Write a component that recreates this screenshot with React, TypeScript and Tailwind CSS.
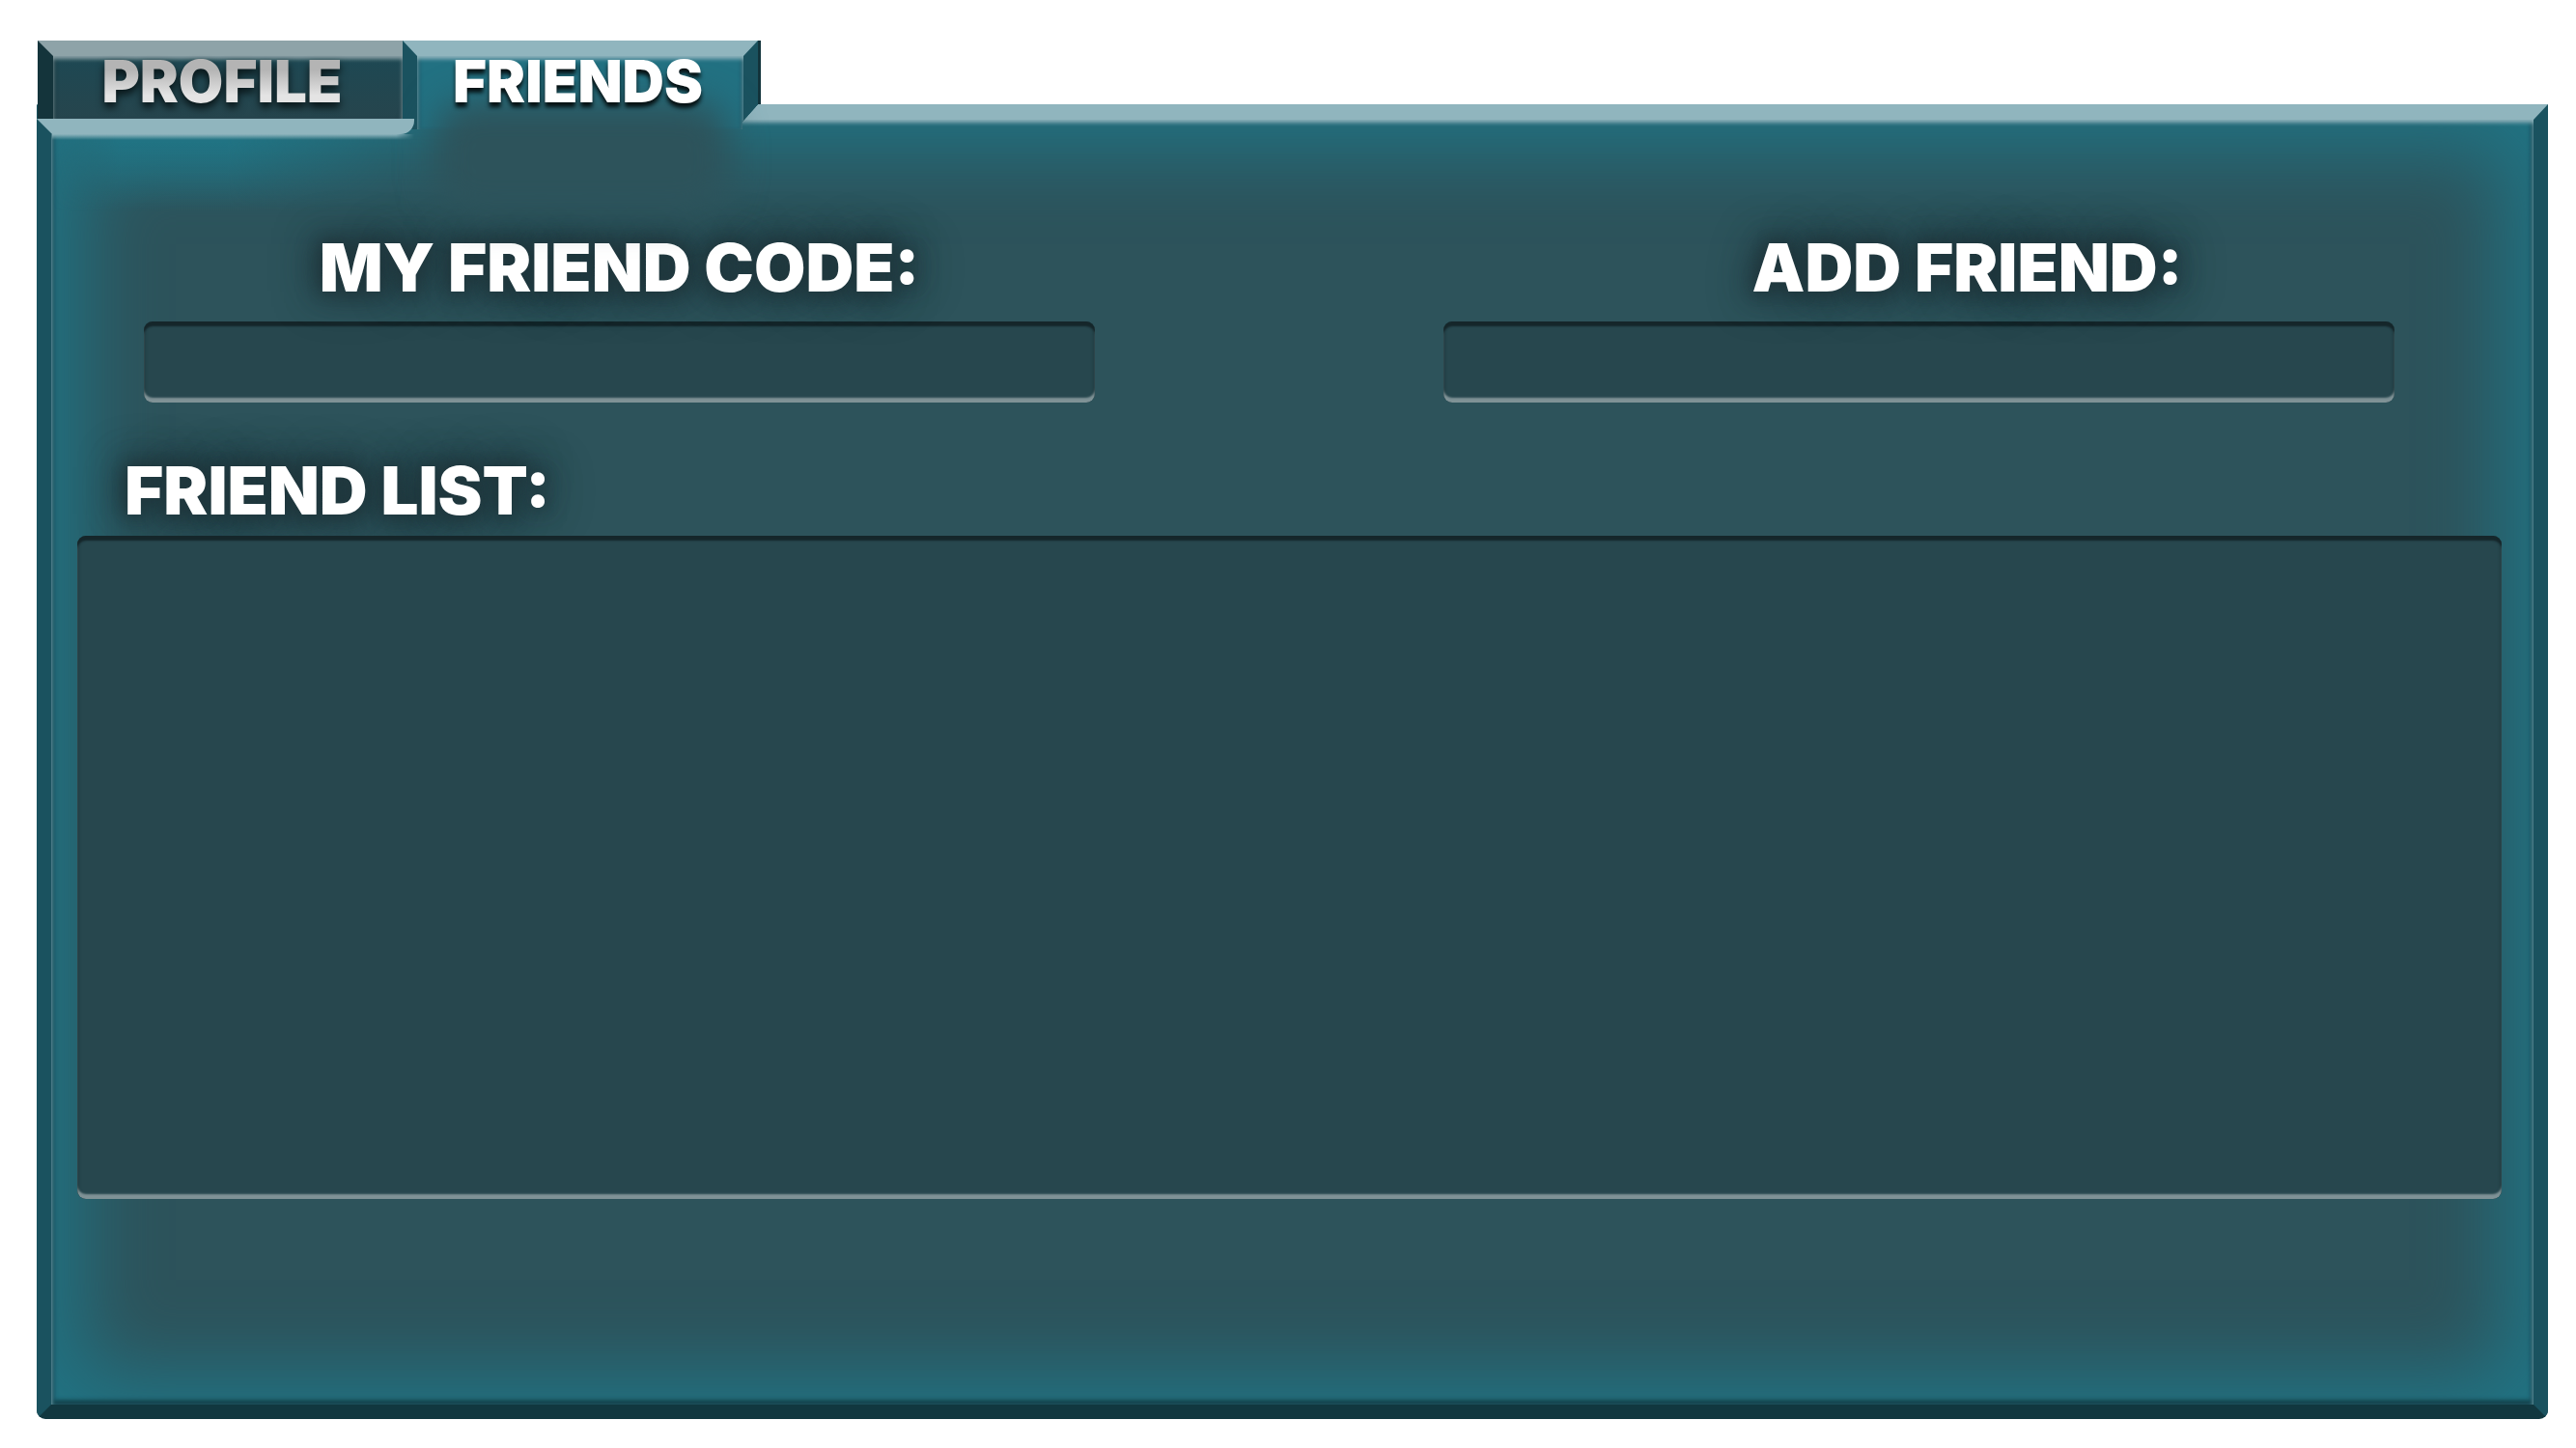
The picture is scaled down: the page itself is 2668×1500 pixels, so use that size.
import { useState } from "react";

const heading = "font-['Inter','Liberation_Sans',sans-serif] font-black whitespace-nowrap";

const glow =
  "text-white [text-shadow:0_0_14px_#20373d,0_0_24px_#20373d,0_0_36px_#20373d,0_0_48px_#20373d]";

const well =
  "rounded-[9px] bg-[#27474e] shadow-[inset_0_5px_2px_#15262a,inset_0_-5px_2px_#7f9296,inset_2px_0_3px_#203c42,inset_-2px_0_3px_#203c42]";

function Tabs() {
  return (
    <div role="tablist" aria-label="Account" className="relative z-10 flex items-start">
      <div className="w-[378px]">
        <button
          type="button"
          role="tab"
          aria-selected={false}
          className="flex h-[81px] w-full items-center justify-center border-t-[16px] border-l-[16px] border-t-[#8ea3a8] border-l-[#14343b] bg-linear-to-b from-[#1d4853] to-[#26454d] pr-3 pb-[14px] shadow-[inset_0_3px_4px_#8ea3a8,inset_4px_0_4px_-2px_#14343b]"
        >
          <span
            className={`${heading} bg-linear-to-b from-[#b4b4b4] from-30% to-[#e4e4e4] to-75% bg-clip-text text-[60px] leading-[60px] text-transparent drop-shadow-[0_5px_4px_#071214]`}
          >
            PROFILE
          </span>
        </button>
        <div className="relative z-10 -ml-px w-[391px]">
          <div className="h-[16px] rounded-br-[14px] border-t-[16px] border-l-[16px] border-t-[#90b5be] border-l-[#1a525f]" />
          <div className="ml-[16px] h-[6px] bg-linear-to-b from-[#90b5be] to-[#90b5be]/0 mask-r-from-95%" />
        </div>
        <div className="-mt-[6px] ml-[15px] h-[80px] bg-linear-to-b from-[#217383] from-10% to-[#217383]/0 mask-l-from-80% mask-r-from-50%" />
      </div>
      <div className="relative w-[371px]">
        <button
          type="button"
          role="tab"
          aria-selected
          className="relative block h-[92px] w-full bg-[#13343c] pr-[3px] [clip-path:polygon(0_0,100%_0,100%_66px,calc(100%-3px)_66px,calc(100%-19px)_84px,calc(100%-19px)_100%,0_100%)]"
        >
          <span className="flex h-full items-center justify-center border-x-[15px] border-t-[16px] border-x-[#1a525f] border-t-[#90b5be] bg-[#227182] shadow-[inset_0_3px_4px_#90b5be,inset_4px_0_4px_-2px_#1a525f,inset_-4px_0_4px_-2px_#1a525f]" />
        </button>
        <div className="pointer-events-none absolute inset-x-8 top-[62px] h-[120px] rounded-[40px] bg-[#2d535b] blur-[18px]" />
        <span
          className={`${heading} pointer-events-none absolute inset-x-0 top-[12px] pr-2 text-center text-[60px] leading-[60px] text-white [text-shadow:0_5px_4px_#071214]`}
        >
          FRIENDS
        </span>
      </div>
    </div>
  );
}

export default function App() {
  const [code, setCode] = useState("");
  return (
    <main className="flex min-h-screen flex-col bg-white pt-[42px] pr-[29px] pb-[30px] pl-[39px]">
      <div className="h-[66px]">
        <Tabs />
      </div>
      <section className="-ml-px flex flex-1 flex-col rounded-b-[9px] border-x-[15px] border-t-[16px] border-b-[15px] border-x-[#1a525f] border-t-[#90b5be] border-b-[#11373f] bg-[#2d535b] pr-[33px] pb-[213px] pl-[27px] shadow-[inset_0_3px_4px_#90b5be,inset_3px_0_4px_#1a525f,inset_-3px_0_4px_#1a525f,inset_0_-4px_5px_#11373f,inset_0_0_80px_34px_#217383]">
        <div className="flex justify-between pt-[109px] pr-[111px] pl-[69px]">
          <div className="w-[985px]">
            <label
              htmlFor="my-code"
              className={`${heading} ${glow} block h-[100px] text-center text-[69px] leading-[88px]`}
            >
              MY FRIEND CODE:
            </label>
            <input
              id="my-code"
              readOnly
              className={`${well} block h-[84px] w-full px-8 text-4xl text-white outline-none`}
            />
          </div>
          <div className="w-[985px]">
            <label
              htmlFor="add-friend"
              className={`${heading} ${glow} block h-[100px] pl-[100px] text-center text-[69px] leading-[88px]`}
            >
              ADD FRIEND:
            </label>
            <input
              id="add-friend"
              value={code}
              onChange={(e) => setCode(e.target.value)}
              className={`${well} block h-[84px] w-full px-8 text-4xl text-white outline-none`}
            />
          </div>
        </div>
        <h2 className={`${heading} ${glow} h-[138px] pt-[47px] pl-[49px] text-[69px] leading-[88px]`}>
          FRIEND LIST:
        </h2>
        <ul aria-label="Friend list" className={`${well} min-h-40 flex-1`} />
      </section>
    </main>
  );
}
